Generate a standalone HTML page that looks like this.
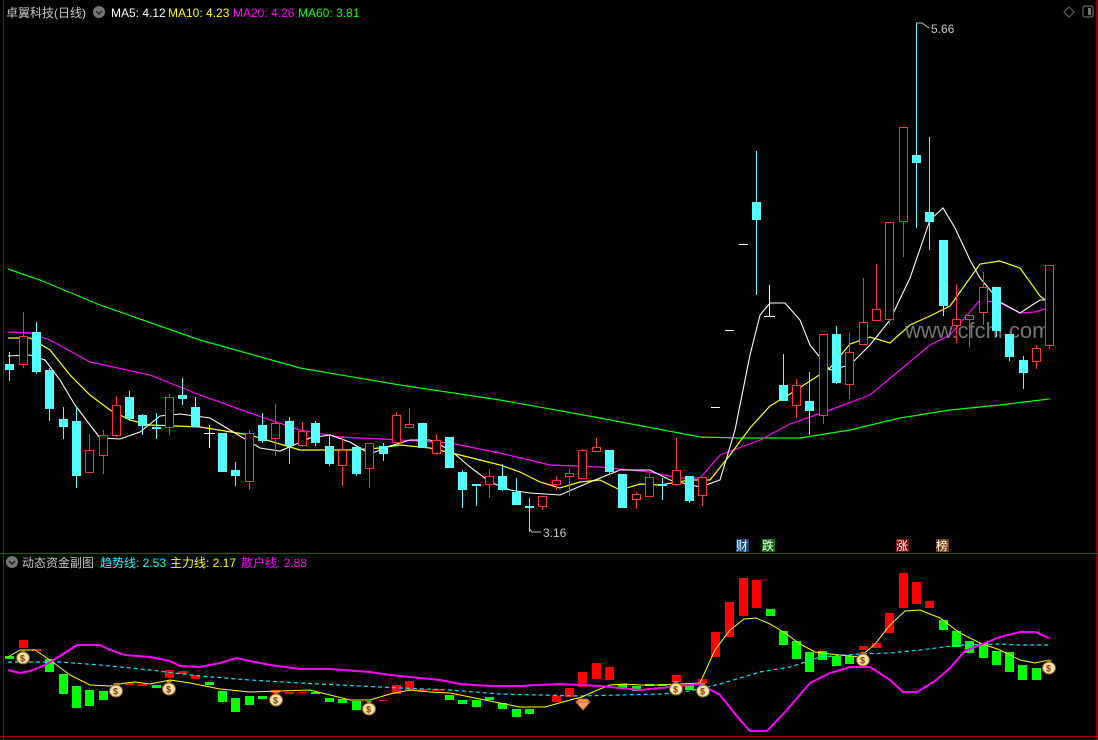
<!DOCTYPE html>
<html><head><meta charset="utf-8"><style>
html,body{margin:0;padding:0;background:#000;}
body{width:1098px;height:740px;overflow:hidden;position:relative;font-family:"Liberation Sans","Noto Sans CJK SC",sans-serif;}
svg{position:absolute;left:0;top:0;}
.t{font-family:"Liberation Sans","Noto Sans CJK SC",sans-serif;font-size:12px;}
</style></head><body>
<svg width="1098" height="740" viewBox="0 0 1098 740" xmlns="http://www.w3.org/2000/svg">
<rect width="1098" height="740" fill="#000"/>
<g shape-rendering="crispEdges">
<line x1="3.5" y1="0" x2="3.5" y2="740" stroke="#a00" stroke-width="1"/>
<line x1="1096.5" y1="0" x2="1096.5" y2="740" stroke="#a00" stroke-width="1"/>
<line x1="0" y1="553.5" x2="1098" y2="553.5" stroke="#a00" stroke-width="1"/>
<line x1="0" y1="736.5" x2="1098" y2="736.5" stroke="#a00" stroke-width="1"/>
</g>

<text x="6" y="17" class="t" fill="#c8c8c8" font-size="13">卓翼科技(日线)</text>
<circle cx="99" cy="12" r="6" fill="#777"/><path d="M96 11 L99 14 L102 11" stroke="#222" stroke-width="1.5" fill="none"/>
<text x="111" y="17" class="t" fill="#fff">MA5: 4.12</text>
<text x="168" y="17" class="t" fill="#ffff00">MA10: 4.23</text>
<text x="233" y="17" class="t" fill="#ff00ff">MA20: 4.26</text>
<text x="298" y="17" class="t" fill="#00ff00">MA60: 3.81</text>
<path d="M1069 7 L1074 12 L1069 17 L1064 12 Z" stroke="#666" fill="none"/>
<rect x="1083" y="6" width="10" height="11" rx="2" stroke="#777" fill="none"/><rect x="1088" y="8" width="3" height="7" fill="#777"/>

<polyline fill="none" stroke="#00ff00" stroke-width="1.2" points="8,269 40,280 100,305 200,340 300,368 400,385 500,400 600,418 700,437 740,438 800,438 850,430 900,418 950,410 1000,405 1049,399"/>
<polyline fill="none" stroke="#ff00ff" stroke-width="1.2" points="8,332 30,333 50,340 90,362 150,375 200,395 250,413 300,430 340,437 400,440 450,443 500,453 550,465 600,467 650,472 680,478 700,478 720,455 760,440 790,424 830,410 870,395 900,370 930,345 950,335 980,300 1000,303 1020,313 1035,312 1048,308"/>
<polyline fill="none" stroke="#ffff00" stroke-width="1.2" points="8,338 30,338 50,350 70,375 90,395 110,410 130,420 150,425 200,427 250,435 300,450 350,450 380,448 400,445 430,448 460,455 480,460 500,465 520,472 540,482 560,488 580,482 600,480 620,490 640,484 660,485 690,480 710,480 730,455 750,428 770,406 790,394 810,381 830,368 850,344 870,337 890,343 910,325 930,316 950,306 980,264 1000,261 1020,268 1040,296 1048,302"/>
<polyline fill="none" stroke="#fff" stroke-width="1.1" points="8,356 30,355 45,360 60,380 75,405 90,425 100,438 120,439 140,432 160,416 180,414 210,418 230,430 260,448 280,451 310,438 330,435 350,442 370,454 390,446 410,440 430,440 450,450 470,467 490,482 510,490 530,493 560,495 590,482 620,470 650,470 670,480 700,487 720,480 735,430 750,355 760,315 770,303 785,303 800,320 810,345 830,370 850,365 870,345 890,320 910,278 930,220 943,208 955,228 970,260 980,278 1000,302 1020,313 1040,300 1048,300"/>

<text x="905" y="338" font-family="Liberation Sans,sans-serif" font-size="22" fill="#8a8a8a" fill-opacity="0.85">www.cfchi.com</text>

<g fill="#54ffff" stroke="#54ffff" shape-rendering="crispEdges">
<line x1="9.5" y1="352" x2="9.5" y2="381"/><rect x="5" y="364" width="9" height="6" stroke="none"/>
<line x1="36.5" y1="322" x2="36.5" y2="374"/><rect x="32" y="332" width="9" height="40" stroke="none"/>
<line x1="49.5" y1="368" x2="49.5" y2="421"/><rect x="45" y="370" width="9" height="39" stroke="none"/>
<line x1="63.5" y1="407" x2="63.5" y2="439"/><rect x="59" y="419" width="9" height="8" stroke="none"/>
<line x1="76.5" y1="407" x2="76.5" y2="488"/><rect x="72" y="421" width="9" height="55" stroke="none"/>
<line x1="129.5" y1="391" x2="129.5" y2="421"/><rect x="125" y="397" width="9" height="22" stroke="none"/>
<line x1="142.5" y1="414" x2="142.5" y2="435"/><rect x="138" y="415" width="9" height="11" stroke="none"/>
<line x1="156.5" y1="413" x2="156.5" y2="439"/><rect x="152" y="427" width="9" height="2" stroke="none"/>
<line x1="182.5" y1="378" x2="182.5" y2="405"/><rect x="178" y="395" width="9" height="4" stroke="none"/>
<line x1="195.5" y1="397" x2="195.5" y2="427"/><rect x="191" y="407" width="9" height="20" stroke="none"/>
<rect x="218" y="433" width="9" height="39" stroke="none"/>
<line x1="235.5" y1="462" x2="235.5" y2="486"/><rect x="231" y="470" width="9" height="6" stroke="none"/>
<line x1="262.5" y1="413" x2="262.5" y2="443"/><rect x="258" y="425" width="9" height="16" stroke="none"/>
<line x1="289.5" y1="417" x2="289.5" y2="464"/><rect x="285" y="421" width="9" height="25" stroke="none"/>
<line x1="315.5" y1="421" x2="315.5" y2="446"/><rect x="311" y="423" width="9" height="20" stroke="none"/>
<line x1="329.5" y1="435" x2="329.5" y2="466"/><rect x="325" y="446" width="9" height="18" stroke="none"/>
<line x1="356.5" y1="446" x2="356.5" y2="476"/><rect x="352" y="447" width="9" height="27" stroke="none"/>
<line x1="383.5" y1="443" x2="383.5" y2="461"/><rect x="379" y="446" width="9" height="8" stroke="none"/>
<rect x="418" y="423" width="9" height="25" stroke="none"/>
<rect x="445" y="437" width="9" height="31" stroke="none"/>
<line x1="462.5" y1="470" x2="462.5" y2="508"/><rect x="458" y="472" width="9" height="18" stroke="none"/>
<line x1="476.5" y1="484" x2="476.5" y2="506"/><rect x="472" y="484" width="9" height="2" stroke="none"/>
<line x1="502.5" y1="464" x2="502.5" y2="491"/><rect x="498" y="476" width="9" height="14" stroke="none"/>
<line x1="516.5" y1="478" x2="516.5" y2="505"/><rect x="512" y="492" width="9" height="13" stroke="none"/>
<line x1="529.5" y1="498" x2="529.5" y2="532"/><rect x="525" y="506" width="9" height="2" stroke="none"/>
<line x1="609.5" y1="450" x2="609.5" y2="473"/><rect x="605" y="450" width="9" height="22" stroke="none"/>
<rect x="618" y="474" width="9" height="34" stroke="none"/>
<line x1="662.5" y1="478" x2="662.5" y2="500"/><rect x="658" y="484" width="9" height="2" stroke="none"/>
<line x1="689.5" y1="476" x2="689.5" y2="503"/><rect x="685" y="476" width="9" height="25" stroke="none"/>
<line x1="756.5" y1="151" x2="756.5" y2="295"/><rect x="752" y="202" width="9" height="18" stroke="none"/>
<line x1="783.5" y1="354" x2="783.5" y2="401"/><rect x="779" y="385" width="9" height="16" stroke="none"/>
<line x1="809.5" y1="372" x2="809.5" y2="435"/><rect x="805" y="401" width="9" height="10" stroke="none"/>
<line x1="836.5" y1="326" x2="836.5" y2="384"/><rect x="832" y="334" width="9" height="49" stroke="none"/>
<line x1="916.5" y1="23" x2="916.5" y2="228"/><rect x="912" y="155" width="9" height="8" stroke="none"/>
<line x1="929.5" y1="137" x2="929.5" y2="250"/><rect x="925" y="212" width="9" height="10" stroke="none"/>
<line x1="943.5" y1="240" x2="943.5" y2="316"/><rect x="939" y="240" width="9" height="66" stroke="none"/>
<line x1="996.5" y1="287" x2="996.5" y2="337"/><rect x="992" y="287" width="9" height="44" stroke="none"/>
<line x1="1009.5" y1="334" x2="1009.5" y2="361"/><rect x="1005" y="334" width="9" height="23" stroke="none"/>
<line x1="1023.5" y1="356" x2="1023.5" y2="389"/><rect x="1019" y="360" width="9" height="13" stroke="none"/>
</g>

<!-- red candles: wick, red filled rect, black inner -->
<g shape-rendering="crispEdges">
<g fill="#ff3232">
<rect x="23" y="312" width="1" height="56"/><rect x="19" y="336" width="9" height="29"/>
<rect x="89" y="434" width="1" height="39"/><rect x="85" y="450" width="9" height="23"/>
<rect x="103" y="430" width="1" height="44"/><rect x="99" y="435" width="9" height="21"/>
<rect x="116" y="396" width="1" height="41"/><rect x="112" y="405" width="9" height="31"/>
<rect x="169" y="394" width="1" height="41"/><rect x="165" y="397" width="9" height="31"/>
<rect x="249" y="430" width="1" height="60"/><rect x="245" y="433" width="9" height="49"/>
<rect x="275" y="404" width="1" height="52"/><rect x="271" y="423" width="9" height="16"/>
<rect x="302" y="422" width="1" height="25"/><rect x="298" y="431" width="9" height="15"/>
<rect x="342" y="436" width="1" height="50"/><rect x="338" y="450" width="9" height="16"/>
<rect x="369" y="443" width="1" height="45"/><rect x="365" y="443" width="9" height="26"/>
<rect x="396" y="412" width="1" height="32"/><rect x="392" y="415" width="9" height="28"/>
<rect x="409" y="408" width="1" height="19"/><rect x="405" y="424" width="9" height="4"/>
<rect x="436" y="434" width="1" height="21"/><rect x="432" y="440" width="9" height="14"/>
<rect x="489" y="469" width="1" height="29"/><rect x="485" y="476" width="9" height="9"/>
<rect x="542" y="496" width="1" height="14"/><rect x="538" y="496" width="9" height="11"/>
<rect x="556" y="476" width="1" height="14"/><rect x="552" y="480" width="9" height="5"/>
<rect x="569" y="469" width="1" height="27"/><rect x="565" y="473" width="9" height="4"/>
<rect x="582" y="449" width="1" height="30"/><rect x="578" y="450" width="9" height="29"/>
<rect x="596" y="438" width="1" height="13"/><rect x="592" y="447" width="9" height="5"/>
<rect x="636" y="492" width="1" height="17"/><rect x="632" y="494" width="9" height="6"/>
<rect x="649" y="473" width="1" height="24"/><rect x="645" y="477" width="9" height="20"/>
<rect x="676" y="438" width="1" height="48"/><rect x="672" y="470" width="9" height="15"/>
<rect x="702" y="477" width="1" height="29"/><rect x="698" y="477" width="9" height="19"/>
<rect x="796" y="379" width="1" height="39"/><rect x="792" y="385" width="9" height="21"/>
<rect x="823" y="334" width="1" height="90"/><rect x="819" y="334" width="9" height="82"/>
<rect x="849" y="333" width="1" height="66"/><rect x="845" y="352" width="9" height="33"/>
<rect x="863" y="278" width="1" height="67"/><rect x="859" y="322" width="9" height="23"/>
<rect x="876" y="264" width="1" height="57"/><rect x="872" y="309" width="9" height="12"/>
<rect x="889" y="222" width="1" height="103"/><rect x="885" y="222" width="9" height="98"/>
<rect x="903" y="127" width="1" height="130"/><rect x="899" y="127" width="9" height="95"/>
<rect x="956" y="284" width="1" height="59"/><rect x="952" y="319" width="9" height="7"/>
<rect x="969" y="316" width="1" height="31"/><rect x="965" y="315" width="9" height="5"/>
<rect x="983" y="272" width="1" height="53"/><rect x="979" y="287" width="9" height="26"/>
<rect x="1036" y="345" width="1" height="24"/><rect x="1032" y="348" width="9" height="14"/>
<rect x="1049" y="265" width="1" height="84"/><rect x="1045" y="265" width="9" height="81"/>
</g>
<g fill="#000">
<rect x="20" y="337" width="7" height="27"/><rect x="86" y="451" width="7" height="21"/><rect x="100" y="436" width="7" height="19"/><rect x="113" y="406" width="7" height="29"/><rect x="166" y="398" width="7" height="29"/><rect x="246" y="434" width="7" height="47"/><rect x="272" y="424" width="7" height="14"/><rect x="299" y="432" width="7" height="13"/><rect x="339" y="451" width="7" height="14"/><rect x="366" y="444" width="7" height="24"/><rect x="393" y="416" width="7" height="26"/><rect x="406" y="425" width="7" height="2"/><rect x="433" y="441" width="7" height="12"/><rect x="486" y="477" width="7" height="7"/><rect x="539" y="497" width="7" height="9"/><rect x="553" y="481" width="7" height="3"/><rect x="566" y="474" width="7" height="2"/><rect x="579" y="451" width="7" height="27"/><rect x="593" y="448" width="7" height="3"/><rect x="633" y="495" width="7" height="4"/><rect x="646" y="478" width="7" height="18"/><rect x="673" y="471" width="7" height="13"/><rect x="699" y="478" width="7" height="17"/><rect x="793" y="386" width="7" height="19"/><rect x="820" y="335" width="7" height="80"/><rect x="846" y="353" width="7" height="31"/><rect x="860" y="323" width="7" height="21"/><rect x="873" y="310" width="7" height="10"/><rect x="886" y="223" width="7" height="96"/><rect x="900" y="128" width="7" height="93"/><rect x="953" y="320" width="7" height="5"/><rect x="966" y="316" width="7" height="3"/><rect x="980" y="288" width="7" height="24"/><rect x="1033" y="349" width="7" height="12"/><rect x="1046" y="266" width="7" height="79"/>
</g>
</g>

<g stroke="#fff" stroke-width="1" shape-rendering="crispEdges">
<line x1="209.5" y1="425" x2="209.5" y2="448"/><line x1="204" y1="433.5" x2="215" y2="433.5"/>
<line x1="769.5" y1="285" x2="769.5" y2="316"/><line x1="764" y1="316.5" x2="775" y2="316.5"/>
<line x1="711" y1="407.5" x2="720" y2="407.5"/>
<line x1="725" y1="330.5" x2="734" y2="330.5"/>
<line x1="739" y1="244.5" x2="748" y2="244.5"/>
</g>
<polyline points="916,23 922,23 929,28" stroke="#bbb" fill="none"/>
<text x="931" y="33" class="t" fill="#c8c8c8">5.66</text>
<polyline points="529,528 532,532 541,532" stroke="#bbb" fill="none"/>
<text x="543" y="537" class="t" fill="#c8c8c8">3.16</text>

<rect x="736" y="539" width="13" height="13" fill="#14417a"/><text x="736" y="550" font-size="12" fill="#fff" font-family="Noto Sans CJK SC,sans-serif">财</text>
<rect x="762" y="539" width="13" height="13" fill="#0a6a0a"/><text x="762" y="550" font-size="12" fill="#fff" font-family="Noto Sans CJK SC,sans-serif">跌</text>
<rect x="896" y="539" width="13" height="13" fill="#7a0a0a"/><text x="896" y="550" font-size="12" fill="#fff" font-family="Noto Sans CJK SC,sans-serif">涨</text>
<rect x="936" y="539" width="13" height="13" fill="#7a3a0a"/><text x="936" y="550" font-size="12" fill="#fff" font-family="Noto Sans CJK SC,sans-serif">榜</text>

<circle cx="12" cy="562" r="6" fill="#777"/><path d="M9 561 L12 564 L15 561" stroke="#222" stroke-width="1.5" fill="none"/>
<text x="22" y="567" class="t" fill="#c8c8c8" font-size="13">动态资金副图</text>
<text x="100" y="567" class="t" fill="#00ffff">趋势线: 2.53</text>
<text x="170" y="567" class="t" fill="#ffff00">主力线: 2.17</text>
<text x="241" y="567" class="t" fill="#ff00ff">散户线: 2.88</text>

<g fill="#00ff00" shape-rendering="crispEdges">
<rect x="5" y="656" width="9" height="3"/>
<rect x="45" y="659" width="9" height="13"/><rect x="59" y="674" width="9" height="20"/><rect x="72" y="686" width="9" height="22"/><rect x="85" y="690" width="9" height="16"/><rect x="99" y="691" width="9" height="9"/>
<rect x="152" y="685" width="9" height="3"/><rect x="205" y="682" width="9" height="3"/><rect x="218" y="691" width="9" height="11"/><rect x="231" y="698" width="9" height="14"/><rect x="245" y="696" width="9" height="9"/><rect x="258" y="696" width="9" height="3"/>
<rect x="311" y="692" width="9" height="2"/><rect x="325" y="698" width="9" height="4"/><rect x="338" y="699" width="9" height="4"/><rect x="352" y="701" width="9" height="9"/>
<rect x="445" y="695" width="9" height="5"/><rect x="458" y="700" width="9" height="4"/><rect x="472" y="700" width="9" height="7"/><rect x="485" y="697" width="9" height="3"/><rect x="498" y="703" width="9" height="6"/><rect x="512" y="709" width="9" height="8"/><rect x="525" y="709" width="9" height="5"/>
<rect x="618" y="684" width="9" height="4"/><rect x="632" y="686" width="9" height="5"/><rect x="645" y="684" width="9" height="2"/><rect x="658" y="684" width="9" height="2"/><rect x="685" y="685" width="9" height="5"/>
<rect x="766" y="609" width="9" height="7"/><rect x="779" y="631" width="9" height="14"/><rect x="792" y="641" width="9" height="18"/><rect x="805" y="652" width="9" height="20"/><rect x="818" y="651" width="9" height="9"/><rect x="832" y="656" width="9" height="10"/><rect x="845" y="656" width="9" height="8"/>
<rect x="939" y="620" width="9" height="10"/><rect x="952" y="631" width="9" height="16"/><rect x="965" y="641" width="9" height="12"/><rect x="979" y="643" width="9" height="15"/><rect x="992" y="651" width="9" height="14"/><rect x="1005" y="652" width="9" height="20"/><rect x="1018" y="665" width="9" height="15"/><rect x="1032" y="668" width="9" height="12"/>
</g>
<g fill="#ff0000" shape-rendering="crispEdges">
<rect x="19" y="640" width="9" height="8"/><rect x="32" y="649" width="9" height="2"/>
<rect x="125" y="683" width="9" height="2"/><rect x="138" y="684" width="9" height="2"/><rect x="165" y="670" width="9" height="8"/><rect x="178" y="671" width="9" height="3"/><rect x="191" y="675" width="9" height="4"/>
<rect x="271" y="690" width="9" height="3"/><rect x="285" y="692" width="9" height="2"/><rect x="298" y="692" width="9" height="1"/>
<rect x="379" y="700" width="9" height="1"/><rect x="392" y="685" width="9" height="9"/><rect x="405" y="681" width="9" height="9"/><rect x="418" y="689" width="9" height="3"/><rect x="432" y="689" width="9" height="2"/>
<rect x="552" y="696" width="9" height="6"/><rect x="565" y="688" width="9" height="9"/><rect x="578" y="672" width="9" height="15"/><rect x="592" y="663" width="9" height="16"/><rect x="605" y="667" width="9" height="13"/>
<rect x="672" y="675" width="9" height="7"/><rect x="698" y="679" width="9" height="4"/>
<rect x="711" y="632" width="9" height="25"/><rect x="725" y="602" width="9" height="35"/><rect x="739" y="578" width="9" height="38"/><rect x="752" y="580" width="9" height="28"/>
<rect x="859" y="646" width="9" height="4"/><rect x="872" y="643" width="9" height="5"/><rect x="885" y="613" width="9" height="20"/><rect x="899" y="573" width="9" height="35"/><rect x="912" y="582" width="9" height="22"/><rect x="925" y="601" width="9" height="7"/>
</g>
<polyline fill="none" stroke="#00e5ff" stroke-width="1.2" stroke-dasharray="4,3" points="8,662 30,662 60,662 100,665 150,670 200,676 250,680 300,683 340,685 400,688 450,690 500,694 540,695 580,696 620,695 660,694 690,691 720,684 760,672 790,667 820,657 860,654 890,653 920,650 960,645 1000,644 1020,645 1049,645"/>
<polyline fill="none" stroke="#ffff00" stroke-width="1" points="8,657 20,650 35,650 50,660 70,675 90,685 110,686 125,683 135,682 150,684 170,680 190,683 220,689 250,692 280,691 310,690 350,700 370,700 390,694 410,690 430,692 450,693 470,697 500,703 520,707 545,707 570,700 582,697 595,691 610,685 625,684 640,685 660,685 680,684 700,683 715,650 730,630 744,619 756,618 770,624 785,633 800,644 815,652 830,654 860,657 875,644 890,625 905,611 920,610 940,618 960,633 980,643 1000,650 1020,660 1035,663 1049,660"/>
<polyline fill="none" stroke="#ff00ff" stroke-width="2" points="8,670 20,673 30,671 45,665 60,656 77,645 100,645 110,650 125,655 150,657 170,661 180,666 200,667 220,663 236,658 250,661 270,665 300,669 330,669 370,672 390,675 440,680 460,684 490,686 520,686 560,684 600,686 640,690 680,686 700,684 720,695 740,720 750,731 767,731 785,712 810,683 830,673 850,667 870,667 890,680 903,692 917,692 935,681 950,668 965,651 980,645 1000,637 1020,632 1035,632 1049,638"/>

<g>
<g transform="translate(23,658)"><path d="M-3,-8 L3,-8 L1,-5 L-1,-5 Z" fill="#b8860b"/><ellipse cx="0" cy="0" rx="6.5" ry="6" fill="#f5e6a0" stroke="#8b5a1b"/><text x="-3" y="3.5" font-size="9" font-weight="bold" fill="#8b2a1b" font-family="Liberation Sans,sans-serif">$</text></g>
<g transform="translate(116,691)"><path d="M-3,-8 L3,-8 L1,-5 L-1,-5 Z" fill="#b8860b"/><ellipse cx="0" cy="0" rx="6.5" ry="6" fill="#f5e6a0" stroke="#8b5a1b"/><text x="-3" y="3.5" font-size="9" font-weight="bold" fill="#8b2a1b" font-family="Liberation Sans,sans-serif">$</text></g>
<g transform="translate(169,689)"><path d="M-3,-8 L3,-8 L1,-5 L-1,-5 Z" fill="#b8860b"/><ellipse cx="0" cy="0" rx="6.5" ry="6" fill="#f5e6a0" stroke="#8b5a1b"/><text x="-3" y="3.5" font-size="9" font-weight="bold" fill="#8b2a1b" font-family="Liberation Sans,sans-serif">$</text></g>
<g transform="translate(276,700)"><path d="M-3,-8 L3,-8 L1,-5 L-1,-5 Z" fill="#b8860b"/><ellipse cx="0" cy="0" rx="6.5" ry="6" fill="#f5e6a0" stroke="#8b5a1b"/><text x="-3" y="3.5" font-size="9" font-weight="bold" fill="#8b2a1b" font-family="Liberation Sans,sans-serif">$</text></g>
<g transform="translate(369,709)"><path d="M-3,-8 L3,-8 L1,-5 L-1,-5 Z" fill="#b8860b"/><ellipse cx="0" cy="0" rx="6.5" ry="6" fill="#f5e6a0" stroke="#8b5a1b"/><text x="-3" y="3.5" font-size="9" font-weight="bold" fill="#8b2a1b" font-family="Liberation Sans,sans-serif">$</text></g>
<g transform="translate(676,689)"><path d="M-3,-8 L3,-8 L1,-5 L-1,-5 Z" fill="#b8860b"/><ellipse cx="0" cy="0" rx="6.5" ry="6" fill="#f5e6a0" stroke="#8b5a1b"/><text x="-3" y="3.5" font-size="9" font-weight="bold" fill="#8b2a1b" font-family="Liberation Sans,sans-serif">$</text></g>
<g transform="translate(703,691)"><path d="M-3,-8 L3,-8 L1,-5 L-1,-5 Z" fill="#b8860b"/><ellipse cx="0" cy="0" rx="6.5" ry="6" fill="#f5e6a0" stroke="#8b5a1b"/><text x="-3" y="3.5" font-size="9" font-weight="bold" fill="#8b2a1b" font-family="Liberation Sans,sans-serif">$</text></g>
<g transform="translate(863,660)"><path d="M-3,-8 L3,-8 L1,-5 L-1,-5 Z" fill="#b8860b"/><ellipse cx="0" cy="0" rx="6.5" ry="6" fill="#f5e6a0" stroke="#8b5a1b"/><text x="-3" y="3.5" font-size="9" font-weight="bold" fill="#8b2a1b" font-family="Liberation Sans,sans-serif">$</text></g>
<g transform="translate(1049,668)"><path d="M-3,-8 L3,-8 L1,-5 L-1,-5 Z" fill="#b8860b"/><ellipse cx="0" cy="0" rx="6.5" ry="6" fill="#f5e6a0" stroke="#8b5a1b"/><text x="-3" y="3.5" font-size="9" font-weight="bold" fill="#8b2a1b" font-family="Liberation Sans,sans-serif">$</text></g>
</g>
<path d="M576,702 L590,702 L583,710 Z M576,702 L579,699 L587,699 L590,702" fill="#f4a460" stroke="#c86428"/>
</svg>
</body></html>
